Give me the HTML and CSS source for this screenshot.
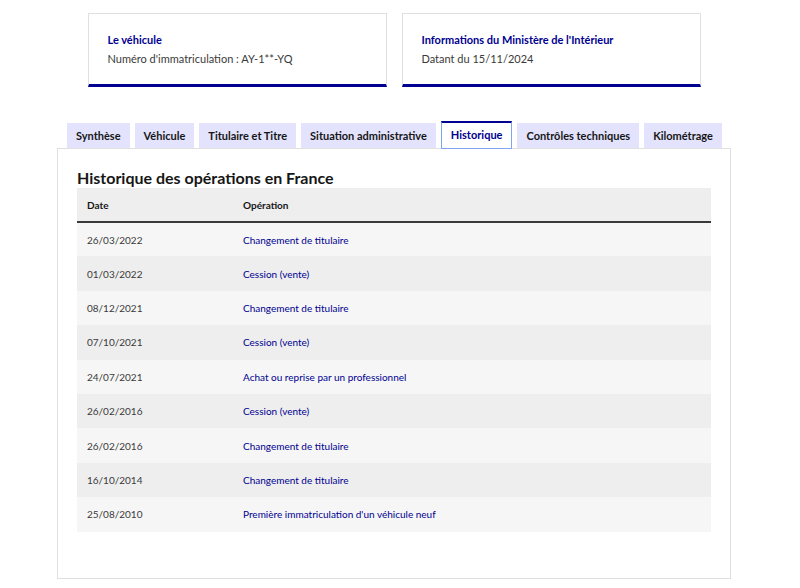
FILE: index.html
```html
<!DOCTYPE html>
<html lang="fr">
<head>
    <meta charset="UTF-8">
    <title>Historique du véhicule</title>
    <link rel="stylesheet" href="styles.css">
</head>
<body>
    <div class="page">
        <div class="cards">
            <div class="card">
                <p class="card-title">Le véhicule</p>
                <p class="card-desc">Numéro d'immatriculation : AY-1**-YQ</p>
            </div>
            <div class="card">
                <p class="card-title">Informations du Ministère de l'Intérieur</p>
                <p class="card-desc">Datant du 15/11/2024</p>
            </div>
        </div>

        <ul class="tabs">
            <li class="tab">Synthèse</li>
            <li class="tab">Véhicule</li>
            <li class="tab">Titulaire et Titre</li>
            <li class="tab">Situation administrative</li>
            <li class="tab active">Historique</li>
            <li class="tab">Contrôles techniques</li>
            <li class="tab">Kilométrage</li>
        </ul>

        <div class="panel">
            <h2>Historique des opérations en France</h2>
            <table class="history">
                <thead>
                    <tr><th class="col-date">Date</th><th>Opération</th></tr>
                </thead>
                <tbody>
                    <tr><td>26/03/2022</td><td class="op">Changement de titulaire</td></tr>
                    <tr><td>01/03/2022</td><td class="op">Cession (vente)</td></tr>
                    <tr><td>08/12/2021</td><td class="op">Changement de titulaire</td></tr>
                    <tr><td>07/10/2021</td><td class="op">Cession (vente)</td></tr>
                    <tr><td>24/07/2021</td><td class="op">Achat ou reprise par un professionnel</td></tr>
                    <tr><td>26/02/2016</td><td class="op">Cession (vente)</td></tr>
                    <tr><td>26/02/2016</td><td class="op">Changement de titulaire</td></tr>
                    <tr><td>16/10/2014</td><td class="op">Changement de titulaire</td></tr>
                    <tr><td>25/08/2010</td><td class="op">Première immatriculation d'un véhicule neuf</td></tr>
                </tbody>
            </table>
        </div>
    </div>
</body>
</html>
```

FILE: styles.css
```css
* {
    margin: 0;
    padding: 0;
    box-sizing: border-box;
}

body {
    background-color: #fff;
    font-family: Lato, "Open Sans", Arial, sans-serif;
    color: #161616;
}

.page {
    width: 674px;
    margin-left: 57px;
    padding-top: 13px;
}

.cards {
    display: flex;
    justify-content: center;
    gap: 15px;
}

.card {
    width: 299px;
    height: 74px;
    border: 1px solid #e0e0e0;
    border-bottom: 3px solid #000091;
    padding: 18px 19px 0;
}

.card-title {
    font-size: 11px;
    font-weight: 700;
    color: #000091;
    line-height: 16px;
}

.card-desc {
    font-size: 11px;
    color: #3a3a3a;
    line-height: 16px;
    margin-top: 3px;
}

.tabs {
    list-style: none;
    display: flex;
    align-items: flex-end;
    gap: 5px;
    padding-left: 10px;
    margin-top: 34px;
    height: 27px;
}

.tab {
    height: 25px;
    padding: 0 9px;
    background-color: #e3e3fd;
    font-size: 11px;
    font-weight: 700;
    line-height: 25px;
    color: #161616;
    white-space: nowrap;
}

.tab.active {
    height: 28px;
    margin-bottom: -1px;
    background-color: #fff;
    color: #000091;
    border: 1px solid #7fa6ee;
    border-top: 2px solid #000091;
    line-height: 24px;
    position: relative;
    z-index: 1;
}

.panel {
    border: 1px solid #e0e0e0;
    padding: 19px 19px 46px;
}

.panel h2 {
    font-size: 16px;
    font-weight: 700;
    color: #161616;
    line-height: 20px;
}

.history {
    width: 100%;
    border-collapse: collapse;
    font-size: 10px;
}

.history th {
    text-align: left;
    font-weight: 700;
    height: 34px;
    padding: 0 10px;
    background-color: #eee;
    border-bottom: 2px solid #3a3a3a;
}

.history .col-date {
    width: 156px;
}

.history td {
    height: 34.4px;
    padding: 0 10px;
    color: #3a3a3a;
}

.history tbody tr:nth-child(odd) {
    background-color: #f6f6f6;
}

.history tbody tr:nth-child(even) {
    background-color: #eee;
}

.history td.op {
    color: #000091;
}
```
